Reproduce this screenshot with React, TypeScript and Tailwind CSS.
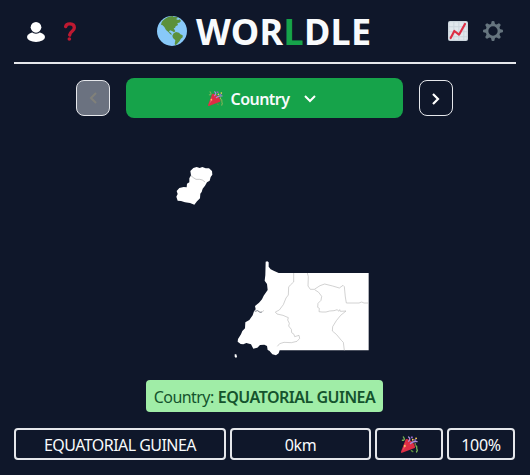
import React from "react";

function Globe() {
  return (
    <svg className="size-[30px] shrink-0" viewBox="0 0 90 90">
      <circle cx="45" cy="45" r="45" fill="#88c9f9" />
      <path fill="#5c913b" d="M14 19C20 9 33 1 47 0L50 3 57 2 64 5 57 9 63 12 68 10 72 15 67 20 61 21 63 27 56 31 54 36 50 37 53 42 55 46 51 49 45 45 39 43 36 47 42 51 45 56 40 55 34 48 27 42 22 33 17 28 12 26Z" />
      <path fill="#5c913b" d="M50 52 57 48 66 50 70 55 77 58 77 64 71 69 68 75 62 82 56 88 53 84 55 73 48 66 46 59Z" />
    </svg>
  );
}

function Popper({ className }: { className: string }) {
  return (
    <svg className={className} viewBox="0 0 36 36">
      <path fill="#dd2e44" d="M10 7C9.500 8 0 33.500 0 33.500c-.5 1.500.3 2.800 2.300 2.200L29 25.500c2-2-1.200-8.900-5.200-12.900S12 5 10 7Z" />
      <path fill="#ea596e" d="m9 15-6 16 7-9Z" />
      <g fill="none" strokeWidth="2.800" strokeLinecap="round">
        <path stroke="#aa8dd8" d="M16 11c4-3 3-7 0-9M20 16c5-5 8-5 14-4" />
        <path stroke="#77b255" d="M3 9c5 1 5-3 2-7M31 21c4-1 1 5 3 8s-2 3-1 5" />
        <path stroke="#5c913b" d="m22 31 3 2" />
      </g>
      <g fill="#fdcb58"><circle cx="25" cy="8" r="2" /><circle cx="32" cy="5" r="2" /><circle cx="8" cy="21" r="2" /><circle cx="30" cy="17" r="1.500" /></g>
      <path fill="#9266cc" d="M21 1h4v4h-4zM28 7h4v3h-4z" />
    </svg>
  );
}

function Chart() {
  return (
    <svg className="size-5" viewBox="0 0 60 60">
      <rect width="60" height="60" rx="6" fill="#ccd6dd" />
      <path fill="#e1e8ed" d="M4 4h12v12H4zm15 0h12v12H19zm15 0h12v12H34zm15 0h7v12h-7zM4 19h12v12H4zm15 0h12v12H19zm15 0h12v12H34zm15 0h7v12h-7zM4 34h12v12H4zm15 0h12v12H19zm15 0h12v12H34zm15 0h7v12h-7zM4 49h12v7H4zm15 0h12v7H19zm15 0h12v7H34zm15 0h7v7h-7z" />
      <path d="M8 51 19 30 33 41 51 9" fill="none" stroke="#dd2e44" strokeWidth="6.500" strokeLinecap="round" strokeLinejoin="round" />
    </svg>
  );
}

function Gear() {
  const angles = [0, 45, 90, 135, 180, 225, 270, 315];
  return (
    <svg className="size-5" viewBox="0 0 60 60">
      <g fill="#66757f">
        {angles.map((a) => <path key={a} d="M23 13 26 1Q30-1 34 1l3 12Z" transform={`rotate(${a} 30 30)`} />)}
      </g>
      <circle cx="30" cy="30" r="18" fill="none" stroke="#66757f" strokeWidth="8" />
    </svg>
  );
}

function CountryMap() {
  return (
    <svg className="ml-[165px] mt-[37px] h-[210px] w-[210px] shrink-0" viewBox="0 0 630 630">
      <path fill="white" d="M85 39 95 36 104 39 112 36 122 40 132 40 141 48 142 59 137 66 134 77 126 82 120 92 113 101 110 111 106 116 105 130 96 139 88 149 75 144 60 142 48 138 38 137 34 125 38 117 35 108 43 99 56 96 65 97 66 86 73 82 73 70 78 61 76 48Z" />
      <path fill="none" stroke="#aaa" strokeWidth="2" d="m78 62 7 6 8 5 11 0 8 2 8 6" />
      <g transform="translate(180 285)">
        <path fill="white" d="m122 35 5-1 4 3 0 13 6 8 9 4 15 7h270v232H164l-3 9-8 6-11-3-9-11-5-2-2-12-8-4-13 1-8 8-12 3-7-13-14-4-9 4-8-1-9-7 1-8 9-14 4-10 8-8 1-18 12-7 10-14 4-12 5-6-2-10 12-10 9-10 5-11 12-17-2-18-7-10 2-17Z" />
        <path fill="white" d="m29 313 5 0 2 7-3 4-4-4Z" />
        <path fill="none" stroke="#bbb" strokeWidth="2" d="M206 69v27l-9 8-6 7-1 24-7 9-8 20-12 16-12 6 5 6 18 4 16 7-2 7 5 10-2 8 8 10 1 10 7 5 2 7 13-4 2 9-8 9-17 4-22-1-13 4-7 8M247 69l3 11-1 28 7 10 12 0 17-11 14-5 24 6 20 6 11-8 4 4 3 31 3 18 38 0 8-3 7 3h14M269 119l12 8 9 12-2 12-9 9-1 12 5 3-1 10 9 1 12 0 11-3 13-1 10-3 4 5 3-5 2 5 17-1-16 13-13 16-11 18-1 13 12 10 15 18 6 6 3 24" />
        <path fill="none" stroke="#404651" strokeWidth="2" d="m89 184 9-2 7 5 6-1" />
        <path fill="none" stroke="#bbb" strokeWidth="2" d="m111 186 6-5" />
      </g>
    </svg>
  );
}

export default function App() {
  const cell = "flex h-8 items-center justify-center rounded-[4px] border-2 border-gray-200";
  return (
    <main className="flex h-[475px] w-[530px] flex-col overflow-hidden bg-[#0f172a] font-['Noto_Sans','Open_Sans',sans-serif] text-base text-slate-50">
      <header className="mx-[14px] flex h-16 shrink-0 items-center border-b-2 border-gray-200">
        <button className="ml-[13px] pt-px" aria-label="Profile">
          <svg className="size-[18px] h-5" viewBox="0 0 54 60" fill="white"><ellipse cx="27" cy="45" rx="27" ry="15" /><circle cx="27" cy="16" r="19" fill="#0f172a" /><circle cx="27" cy="16" r="16" /></svg>
        </button>
        <button className="ml-[19px] pt-px" aria-label="Help">
          <svg className="h-5 w-3" viewBox="0 0 36 60"><path d="M5 14C7 3 31 2 31 17c0 11-13 10-14 22" fill="none" stroke="#be1931" strokeWidth="10" strokeLinecap="round" /><circle cx="16" cy="51" r="5.500" fill="#be1931" /></svg>
        </button>
        <h1 className="ml-[81px] flex w-[214px] items-center gap-[9px] text-4xl leading-none font-bold tracking-[0.3px]"><Globe /><span className="pt-[2px]">WOR<span className="text-[#16a34a]">L</span>DLE</span></h1>
        <button className="ml-[77px]" aria-label="Stats"><Chart /></button>
        <button className="ml-[15px]" aria-label="Settings"><Gear /></button>
      </header>
      <nav className="mt-[14px] ml-[76px] flex h-10 shrink-0 items-center gap-4">
        <button className="flex h-9 w-[34px] items-center justify-center rounded-lg border border-gray-200 bg-[#6b7280]" aria-label="Previous">
          <svg className="size-4" viewBox="0 0 16 16" fill="none" stroke="#80807a" strokeWidth="2"><path d="m11 3-5 5 5 5" /></svg>
        </button>
        <button className="flex h-10 w-[277px] items-center rounded-lg bg-[#16a34a] pl-[82px] text-base font-semibold">
          <Popper className="size-[15px]" />
          <span className="ml-[7px] w-[60px] pt-[2px] tracking-[-0.550px] whitespace-nowrap">Country</span>
          <svg className="ml-[13px] size-[14px]" viewBox="0 0 14 14" fill="none" stroke="white" strokeWidth="2"><path d="m2 5 5 5 5-5" /></svg>
        </button>
        <button className="flex h-9 w-[34px] items-center justify-center rounded-lg border border-gray-200" aria-label="Next">
          <svg className="size-4" viewBox="0 0 16 16" fill="none" stroke="white" strokeWidth="2.200"><path d="m5 4 5 5-5 5" /></svg>
        </button>
      </nav>
      <CountryMap />
      <div className="mt-[15px] ml-[146px] flex h-8 w-[237px] shrink-0 items-center justify-center rounded-[4px] bg-[#a0eda7] pt-px whitespace-nowrap text-[#14532d]">
        <span className="tracking-[-0.550px]">Country:</span><span className="ml-1 font-semibold tracking-[-0.500px]">EQUATORIAL GUINEA</span>
      </div>
      <section className="mt-4 ml-[14px] grid shrink-0 grid-cols-[212px_141px_68px_68px] gap-1">
        <div className={cell}><span className="pt-[2px] tracking-[-0.550px]">EQUATORIAL GUINEA</span></div>
        <div className={cell}><span className="pt-[2px] tracking-[-0.400px]">0km</span></div>
        <div className={cell}><Popper className="size-[17px]" /></div>
        <div className={cell}><span className="pt-[2px] tracking-[-0.300px]">100%</span></div>
      </section>
    </main>
  );
}
